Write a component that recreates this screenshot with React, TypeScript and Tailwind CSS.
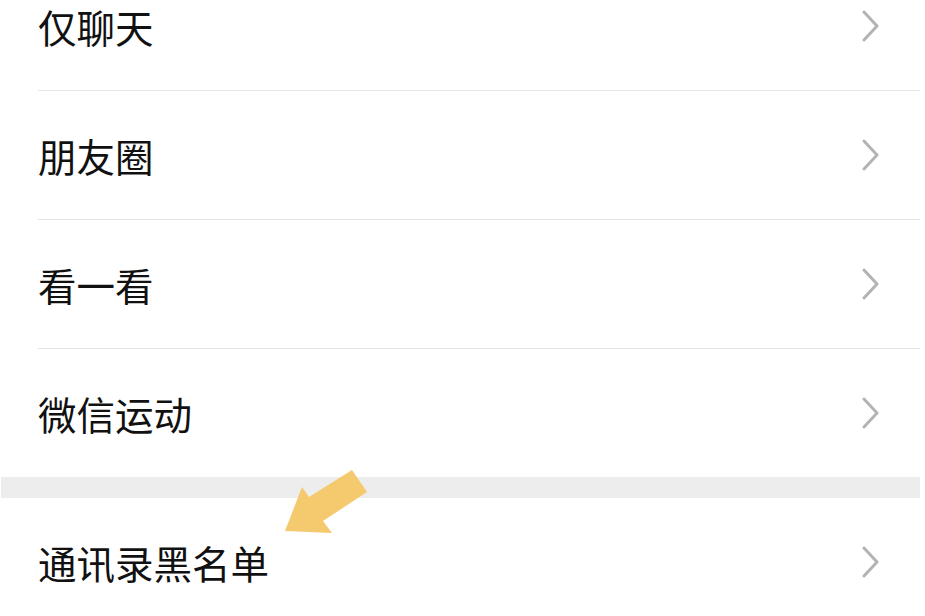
const ROWS_TOP = ["仅聊天", "朋友圈", "看一看", "微信运动"];

function Chevron() {
  return (
    <svg width="20" height="32" viewBox="0 0 20 32" className="shrink-0">
      <polyline
        points="3,2 16,16 3,30"
        fill="none"
        stroke="#b3b3b3"
        strokeWidth="3"
        strokeLinecap="round"
        strokeLinejoin="round"
      />
    </svg>
  );
}

function Row({ label, first }: { label: string; first?: boolean }) {
  return (
    <div
      className={
        first
          ? "flex h-[90px] items-center justify-between pb-[38px] pl-[38px] pr-[39px]"
          : "flex h-[128px] items-center justify-between pl-[38px] pr-[39px]"
      }
    >
      <span className="text-[38.5px] leading-none text-[#111111]">{label}</span>
      <Chevron />
    </div>
  );
}

export default function App() {
  return (
    <div
      className="relative h-[616px] w-[925px] overflow-hidden bg-white"
      style={{ fontFamily: '"Noto Sans CJK SC", "Noto Sans", sans-serif' }}
    >
      <div className="w-[920px]">
        {ROWS_TOP.map((label, i) => (
          <div key={label}>
            <Row label={label} first={i === 0} />
            {i < ROWS_TOP.length - 1 && (
              <div className="ml-[38px] h-px bg-[#e5e5e5]" />
            )}
          </div>
        ))}
        <div className="ml-px h-[21px] bg-[#ededed]" />
        <Row label="通讯录黑名单" />
      </div>

      <svg
        className="pointer-events-none absolute left-0 top-0"
        width="925"
        height="616"
        viewBox="0 0 925 616"
      >
        <polygon
          points="352,470 367,492 323,521 332,533 285,531 302,487 309,497"
          fill="#f5c96e"
        />
      </svg>
    </div>
  );
}
